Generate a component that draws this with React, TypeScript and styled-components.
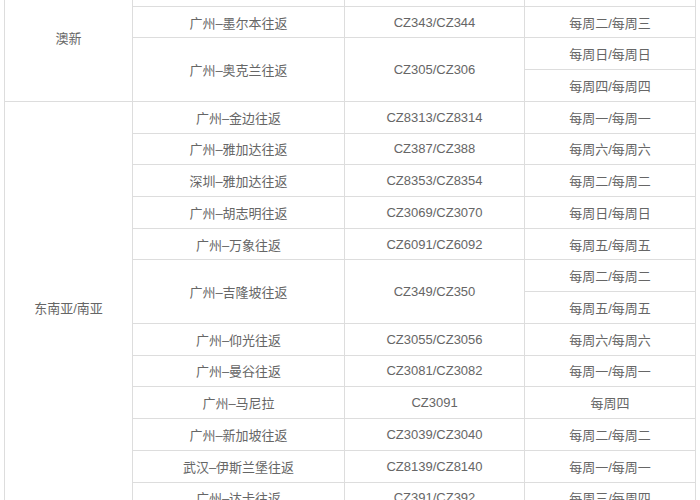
import React, { ReactElement } from "react";
import styled, { createGlobalStyle } from "styled-components";

const GlobalStyle = createGlobalStyle`
  html, body {
    margin: 0;
    padding: 0;
    background: #fff;
  }
  body {
    font-family: "Liberation Sans", "Noto Sans CJK SC", sans-serif;
    overflow: hidden;
  }
`;

const Page = styled.div`
  width: 700px;
  height: 500px;
  overflow: hidden;
  padding: 0 5px 0 4px;
  box-sizing: border-box;
`;

const RouteTable = styled.table`
  width: 691px;
  margin-top: -26px;
  border-collapse: collapse;
  table-layout: fixed;
  color: #666;
  font-size: 13px;
  text-align: center;
`;

const Col = styled.col<{ $width: number }>`
  width: ${p => p.$width}px;
`;

const Row = styled.tr`
  height: 31.73px;
`;

const Cell = styled.td`
  border: 1px solid #ddd;
  padding: 0;
  vertical-align: middle;
  white-space: nowrap;
`;

type Route = {
  name: string;
  flight: string;
  days: string[];
};

type Region = {
  region: string;
  routes: Route[];
};

const columns = [128, 212, 180, 171];

const regions: Region[] = [
  {
    region: "澳新",
    routes: [
      { name: "广州–悉尼往返", flight: "CZ325/CZ326", days: ["每周一/每周一"] },
      { name: "广州–墨尔本往返", flight: "CZ343/CZ344", days: ["每周二/每周三"] },
      {
        name: "广州–奥克兰往返",
        flight: "CZ305/CZ306",
        days: ["每周日/每周日", "每周四/每周四"]
      }
    ]
  },
  {
    region: "东南亚/南亚",
    routes: [
      { name: "广州–金边往返", flight: "CZ8313/CZ8314", days: ["每周一/每周一"] },
      { name: "广州–雅加达往返", flight: "CZ387/CZ388", days: ["每周六/每周六"] },
      { name: "深圳–雅加达往返", flight: "CZ8353/CZ8354", days: ["每周二/每周二"] },
      { name: "广州–胡志明往返", flight: "CZ3069/CZ3070", days: ["每周日/每周日"] },
      { name: "广州–万象往返", flight: "CZ6091/CZ6092", days: ["每周五/每周五"] },
      {
        name: "广州–吉隆坡往返",
        flight: "CZ349/CZ350",
        days: ["每周二/每周二", "每周五/每周五"]
      },
      { name: "广州–仰光往返", flight: "CZ3055/CZ3056", days: ["每周六/每周六"] },
      { name: "广州–曼谷往返", flight: "CZ3081/CZ3082", days: ["每周一/每周一"] },
      { name: "广州–马尼拉", flight: "CZ3091", days: ["每周四"] },
      { name: "广州–新加坡往返", flight: "CZ3039/CZ3040", days: ["每周二/每周二"] },
      { name: "武汉–伊斯兰堡往返", flight: "CZ8139/CZ8140", days: ["每周一/每周一"] },
      { name: "广州–达卡往返", flight: "CZ391/CZ392", days: ["每周三/每周四"] }
    ]
  }
];

const App = (): ReactElement => {
  const rows: ReactElement[] = [];
  regions.forEach((region, r) => {
    const span = region.routes.reduce((n, route) => n + route.days.length, 0);
    region.routes.forEach((route, i) => {
      route.days.forEach((day, d) => {
        rows.push(
          <Row key={`${r}-${i}-${d}`}>
            {i === 0 && d === 0 && <Cell rowSpan={span}>{region.region}</Cell>}
            {d === 0 && <Cell rowSpan={route.days.length}>{route.name}</Cell>}
            {d === 0 && <Cell rowSpan={route.days.length}>{route.flight}</Cell>}
            <Cell>{day}</Cell>
          </Row>
        );
      });
    });
  });

  return (
    <Page>
      <GlobalStyle />
      <RouteTable>
        <colgroup>
          {columns.map((w, i) => (
            <Col key={i} $width={w} />
          ))}
        </colgroup>
        <tbody>{rows}</tbody>
      </RouteTable>
    </Page>
  );
};

export default App;
